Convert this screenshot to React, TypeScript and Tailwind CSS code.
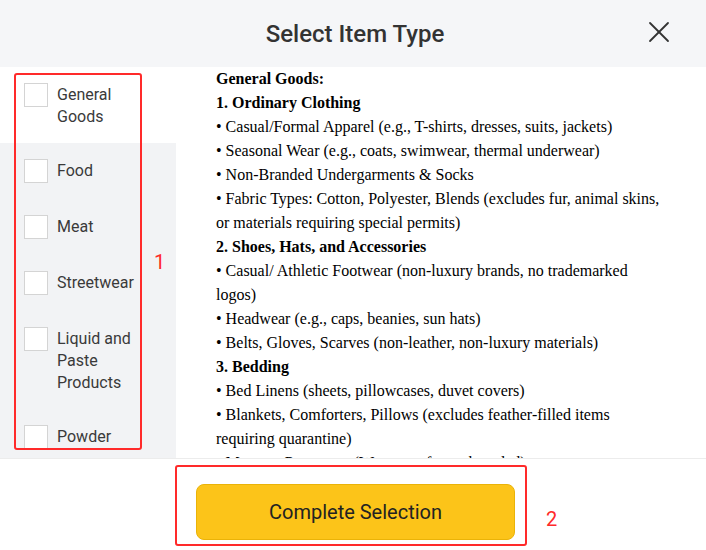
import { X } from "lucide-react";

type Category = { label: string; active?: boolean };

const categories: Category[] = [
  { label: "General Goods", active: true },
  { label: "Food" },
  { label: "Meat" },
  { label: "Streetwear" },
  { label: "Liquid and Paste Products" },
  { label: "Powder" },
];

type Line = { text: string; bold?: boolean };

const lines: Line[] = [
  { text: "General Goods:", bold: true },
  { text: "1. Ordinary Clothing", bold: true },
  { text: "• Casual/Formal Apparel (e.g., T-shirts, dresses, suits, jackets)" },
  { text: "• Seasonal Wear (e.g., coats, swimwear, thermal underwear)" },
  { text: "• Non-Branded Undergarments & Socks" },
  { text: "• Fabric Types: Cotton, Polyester, Blends (excludes fur, animal skins, or materials requiring special permits)" },
  { text: "2. Shoes, Hats, and Accessories", bold: true },
  { text: "• Casual/ Athletic Footwear (non-luxury brands, no trademarked logos)" },
  { text: "• Headwear (e.g., caps, beanies, sun hats)" },
  { text: "• Belts, Gloves, Scarves (non-leather, non-luxury materials)" },
  { text: "3. Bedding", bold: true },
  { text: "• Bed Linens (sheets, pillowcases, duvet covers)" },
  { text: "• Blankets, Comforters, Pillows (excludes feather-filled items requiring quarantine)" },
  { text: "• Mattress Protectors (Waterproof, non-branded)" },
];

export default function App() {
  return (
    <div className="relative flex h-[550px] w-[706px] flex-col overflow-hidden bg-white font-['Roboto',sans-serif]">
      {/* Header */}
      <div className="relative flex h-[67px] shrink-0 items-center justify-center bg-[#f5f6f8] pl-[4px]">
        <h2 className="text-[24px] font-medium text-[#333]">Select Item Type</h2>
        <button className="absolute right-[29px] top-[14px] text-[#333]">
          <X size={36} strokeWidth={1.2} />
        </button>
      </div>

      {/* Body */}
      <div className="flex min-h-0 flex-1 border-b border-[#ececec]">
        <div className="w-[176px] shrink-0 overflow-hidden bg-[#f2f3f5]">
          {categories.map((c) => (
            <div
              key={c.label}
              className={`flex items-start py-4 pl-6 ${c.active ? "bg-white" : ""}`}
            >
              <span className="h-[24px] w-[24px] shrink-0 border border-[#d4d4d4] bg-white" />
              <span className="-mb-[1px] ml-[9px] mt-[1px] w-[90px] text-[16px] leading-[22px] text-[#3a3a3a]">
                {c.label}
              </span>
            </div>
          ))}
        </div>
        <div className="flex-1 overflow-hidden px-10 font-['Liberation_Serif',serif] text-[16px] leading-[24px] text-black">
          {lines.map((l, i) => (
            <p key={i} className={l.bold ? "font-bold" : ""}>
              {l.text}
            </p>
          ))}
        </div>
      </div>

      {/* Footer */}
      <div className="flex h-[91px] shrink-0 justify-center pt-[25px] pl-[5px]">
        <button className="h-[56px] w-[319px] rounded-lg border border-[#eab308] bg-[#fcc419] text-[20px] text-[#222]">
          Complete Selection
        </button>
      </div>

      {/* Annotations */}
      <div className="absolute left-[14px] top-[73px] h-[377px] w-[128px] rounded-[3px] border-2 border-[#ff2a2a]" />
      <span className="absolute left-[154px] top-[247px] text-[20px] text-[#ff2a2a]">1</span>
      <div className="absolute left-[175px] top-[465px] h-[81px] w-[352px] rounded-[3px] border-2 border-[#ff2a2a]" />
      <span className="absolute left-[546px] top-[504px] text-[20px] text-[#ff2a2a]">2</span>
    </div>
  );
}
